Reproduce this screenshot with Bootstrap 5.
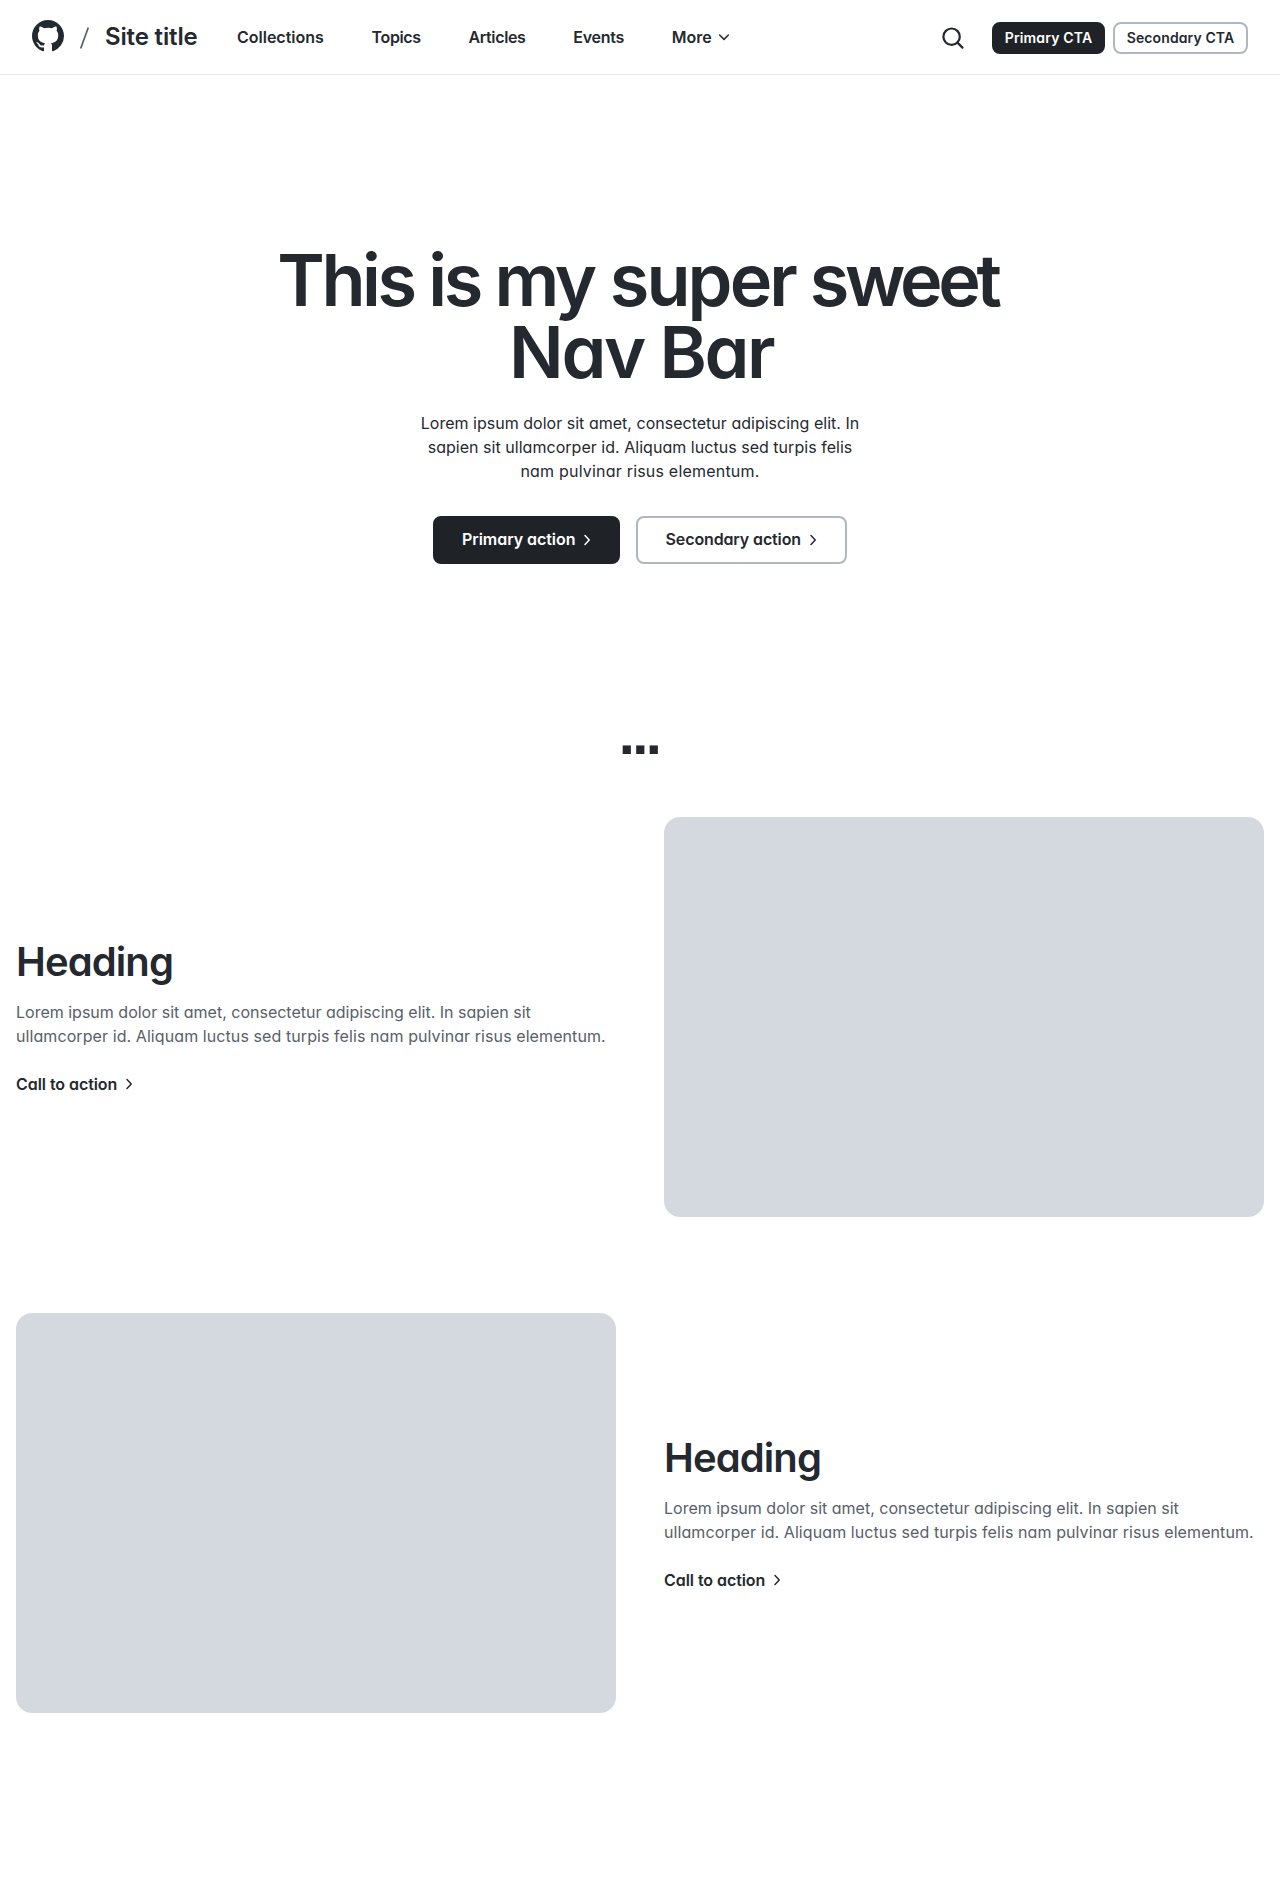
<!DOCTYPE html>
<html lang="en">
<head>
<meta charset="utf-8">
<meta name="viewport" content="width=device-width, initial-scale=1">
<title>Site title</title>
<link rel="stylesheet" href="https://cdn.jsdelivr.net/npm/bootstrap@5.3.0/dist/css/bootstrap.min.css">
<style>
  body { font-family: Inter, "Liberation Sans", sans-serif; font-feature-settings: "cv11"; color: #24292f; background: #fff; font-size: 16px; line-height: 24px; }
  a { color: #24292f; text-decoration: none; white-space: nowrap; }
  svg { display: block; flex-shrink: 0; }
  .top-bar { height: 75px; padding: 0 32px; border-bottom: 1px solid #e1e4e8; flex-wrap: nowrap; }
  .brand-group { padding-bottom: 2px; }
  .brand-slash { margin: 4px 15px 0 15px; }
  .site-name { font-size: 24px; font-weight: 600; letter-spacing: -.15px; width: 132px; padding-top: 2px; }
  .main-links { gap: 47.7px; font-weight: 600; }
  .nav-a { letter-spacing: 0; }
  .nav-b { letter-spacing: -.35px; }
  .nav-c { letter-spacing: -.25px; }
  .search-btn { margin-right: 27px; }
  .actions-right { padding-top: 2px; }
  .act { border: 2px solid #afb8c1; border-radius: 8px; font-weight: 600; padding: 0; line-height: 1; color: #24292f; display: flex; align-items: center; }
  .act-dark { background: #1f2328; border-color: #1f2328; color: #fff; }
  .act-sm { height: 32px; font-size: 14px; justify-content: center; }
  .act-lg { height: 48px; gap: 4px; }
  .act-label { padding-bottom: 2px; }
  .w-cta1 { width: 113px; letter-spacing: .16px; }
  .w-cta2 { width: 135px; letter-spacing: .1px; }
  .w-act1 { width: 187px; padding-left: 27px; letter-spacing: -.05px; }
  .w-act2 { width: 211px; padding-left: 27.6px; letter-spacing: -.13px; }
  .hero-block { padding-top: 169px; height: 626px; }
  .hero-title { font-size: 72px; line-height: 72px; font-weight: 600; margin: 0 0 23px; white-space: nowrap; }
  .title-l1 { letter-spacing: -3.44px; padding-right: 5px; }
  .word-loose { letter-spacing: -2.9px; margin-left: 1.5px; }
  .word-tight { letter-spacing: -4.3px; }
  .title-l2 { letter-spacing: -2.4px; padding-left: 2.4px; }
  .hero-text { margin: 0 0 33px; white-space: nowrap; }
  .dots { font-family: "Liberation Sans", sans-serif; font-size: 58px; line-height: 64px; font-weight: 700; letter-spacing: -2.6px; margin: 0 2px 51px 0; padding-top: 1px; }
  .river { --bs-gutter-x: 48px; margin-bottom: 96px; }
  .river-heading { font-size: 40px; line-height: 48px; font-weight: 600; letter-spacing: -.9px; margin: 0 0 14px; }
  .river-text { color: #57606a; margin: 0 0 24px; white-space: nowrap; }
  .river-link { letter-spacing: -.06px; }
  .river-visual { height: 400px; border-radius: 16px; background: #d4d9e0; }
  .ls-a { letter-spacing: .016px; }
  .ls-b { letter-spacing: .03px; }
  .ls-c { letter-spacing: .2px; }
  .ls-d { letter-spacing: .083px; }
  .ls-e { letter-spacing: 0; }
</style>
</head>
<body>
<header class="top-bar navbar">
  <div class="d-flex align-items-center">
    <div class="brand-group d-flex align-items-center">
      <a href="#" aria-label="GitHub"><svg width="32" height="32" viewBox="0 0 16 16" fill="#24292f"><path d="M8 0C3.58 0 0 3.58 0 8c0 3.54 2.29 6.53 5.47 7.59.4.07.55-.17.55-.38 0-.19-.01-.82-.01-1.49-2.01.37-2.53-.49-2.69-.94-.09-.23-.48-.94-.82-1.13-.28-.15-.68-.52-.01-.53.63-.01 1.08.58 1.23.82.72 1.21 1.87.87 2.33.66.07-.52.28-.87.51-1.07-1.78-.2-3.64-.89-3.64-3.95 0-.87.31-1.59.82-2.15-.08-.2-.36-1.02.08-2.12 0 0 .67-.21 2.2.82.64-.18 1.32-.27 2-.27s1.36.09 2 .27c1.53-1.04 2.2-.82 2.2-.82.44 1.1.16 1.92.08 2.12.51.56.82 1.27.82 2.15 0 3.07-1.87 3.75-3.65 3.95.29.25.54.73.54 1.48 0 1.07-.01 1.93-.01 2.2 0 .21.15.46.55.38A8.01 8.01 0 0 0 16 8c0-4.42-3.58-8-8-8z"/></svg></a>
      <svg class="brand-slash" width="11" height="22" viewBox="0 0 11 22"><path d="M9.3.5 1.7 21.5" stroke="#57606a" stroke-width="1.7" fill="none"/></svg>
      <a href="#" class="site-name">Site title</a>
    </div>
    <nav class="main-links d-flex align-items-center">
      <a href="#" class="nav-a">Collections</a>
      <a href="#" class="nav-b">Topics</a>
      <a href="#" class="nav-b">Articles</a>
      <a href="#" class="nav-c">Events</a>
      <a href="#" class="d-flex align-items-center gap-1">More
        <svg width="16" height="16" viewBox="0 0 16 16"><path d="M3.6 6 8 10.4 12.4 6" fill="none" stroke="#24292f" stroke-width="1.5" stroke-linecap="round"/></svg></a>
    </nav>
  </div>
  <div class="actions-right d-flex align-items-center">
    <a href="#" class="search-btn" aria-label="Search"><svg width="24" height="24" viewBox="0 0 24 24" fill="none" stroke="#24292f" stroke-width="2.2" stroke-linecap="round"><circle cx="10.6" cy="10.7" r="8.2"/><path d="m16.5 16.6 5 5"/></svg></a>
    <div class="d-flex gap-2">
      <a href="#" class="act act-sm act-dark w-cta1">Primary CTA</a>
      <a href="#" class="act act-sm w-cta2">Secondary CTA</a>
    </div>
  </div>
</header>

<section class="hero-block text-center">
  <h1 class="hero-title"><span class="title-l1">This is my <span class="word-loose">super</span> <span class="word-tight">sweet</span></span><br><span class="title-l2">Nav Bar</span></h1>
  <p class="hero-text"><span class="ls-a">Lorem ipsum dolor sit amet, consectetur adipiscing elit. In</span><br><span class="ls-b">sapien sit ullamcorper id. Aliquam luctus sed turpis felis</span><br><span class="ls-c">nam pulvinar risus elementum.</span></p>
  <div class="d-flex justify-content-center gap-3">
    <a href="#" class="act act-lg act-dark w-act1"><span class="act-label">Primary action</span>
      <svg width="16" height="16" viewBox="0 0 16 16"><path d="M6 3.6 10.2 8 6 12.4" fill="none" stroke="#fff" stroke-width="1.5" stroke-linecap="round"/></svg></a>
    <a href="#" class="act act-lg w-act2"><span class="act-label">Secondary action</span>
      <svg width="16" height="16" viewBox="0 0 16 16"><path d="M6 3.6 10.2 8 6 12.4" fill="none" stroke="#24292f" stroke-width="1.5" stroke-linecap="round"/></svg></a>
  </div>
</section>

<div class="dots text-center">...</div>

<main class="container-fluid px-3">
  <section class="river row align-items-center">
    <div class="col-6">
      <h2 class="river-heading">Heading</h2>
      <p class="river-text"><span class="ls-e">Lorem ipsum dolor sit amet, consectetur adipiscing elit. In sapien sit</span><br><span class="ls-d">ullamcorper id. Aliquam luctus sed turpis felis nam pulvinar risus elementum.</span></p>
      <a href="#" class="river-link d-flex align-items-center gap-1 fw-semibold">Call to action
        <svg width="16" height="16" viewBox="0 0 16 16"><path d="M6 3.6 10.2 8 6 12.4" fill="none" stroke="#24292f" stroke-width="1.5" stroke-linecap="round"/></svg></a>
    </div>
    <div class="col-6"><div class="river-visual"></div></div>
  </section>
  <section class="river row align-items-center">
    <div class="col-6"><div class="river-visual"></div></div>
    <div class="col-6">
      <h2 class="river-heading">Heading</h2>
      <p class="river-text"><span class="ls-e">Lorem ipsum dolor sit amet, consectetur adipiscing elit. In sapien sit</span><br><span class="ls-d">ullamcorper id. Aliquam luctus sed turpis felis nam pulvinar risus elementum.</span></p>
      <a href="#" class="river-link d-flex align-items-center gap-1 fw-semibold">Call to action
        <svg width="16" height="16" viewBox="0 0 16 16"><path d="M6 3.6 10.2 8 6 12.4" fill="none" stroke="#24292f" stroke-width="1.5" stroke-linecap="round"/></svg></a>
    </div>
  </section>
</main>
<script src="https://cdn.jsdelivr.net/npm/bootstrap@5.3.0/dist/js/bootstrap.bundle.min.js"></script>
</body>
</html>
